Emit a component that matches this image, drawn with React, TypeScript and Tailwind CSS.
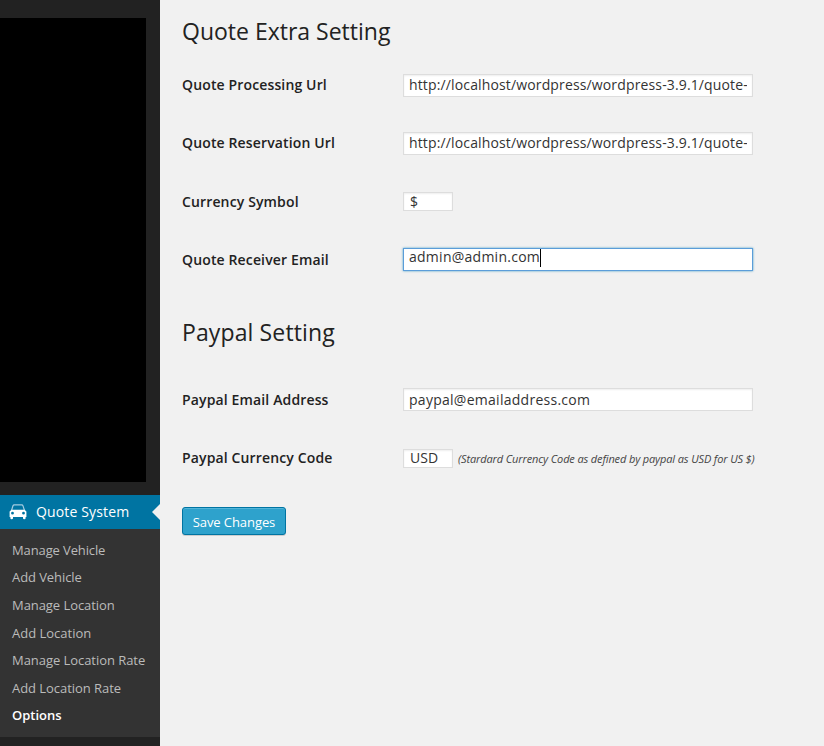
import React from "react";

const links = [
  { label: "Manage Vehicle", height: "h-[27px]", tracking: "tracking-[-0.12px]" },
  { label: "Add Vehicle", height: "h-[28px]", tracking: "tracking-[-0.08px]" },
  { label: "Manage Location", height: "h-[28px]", tracking: "tracking-[-0.06px]" },
  { label: "Add Location", height: "h-[27px]", tracking: "tracking-normal" },
  { label: "Manage Location Rate", height: "h-[28px]", tracking: "tracking-[-0.05px]" },
  { label: "Add Location Rate", height: "h-[27px]", tracking: "tracking-[-0.05px]" },
];

const field =
  "border border-[#ddd] bg-white text-sm text-[#333] shadow-[inset_0_1px_2px_rgba(0,0,0,0.07)] overflow-hidden whitespace-nowrap";

function Row({ label, offset = "pt-[19px]", children }: { label: string; offset?: string; children: React.ReactNode }) {
  return (
    <div className="flex h-[58px] items-start">
      <div className={`w-[221px] shrink-0 text-sm leading-5 font-semibold tracking-[0.14px] text-[#222] ${offset}`}>{label}</div>
      {children}
    </div>
  );
}

function CarIcon() {
  return (
    <svg width="18" height="16" viewBox="0 0 18 16" className="block">
      <path d="M2.5 6.5 L4 1.8 Q4.3 .8 5.4 .8 H12.6 Q13.7 .8 14 1.8 L15.5 6.5" fill="none" stroke="#a4cbe0" strokeWidth="1.2" />
      <path
        fillRule="evenodd"
        fill="#fff"
        d="M2.4 5.7 H15.6 L17.4 7.4 V13 H16.6 V14.3 Q16.6 15.3 15.3 15.3 Q14 15.3 14 14.3 V13 H4 V14.3 Q4 15.3 2.7 15.3 Q1.4 15.3 1.4 14.3 V13 H.6 V7.4 Z M3.5 7.8 A1.4 1.4 0 1 0 3.5 10.6 A1.4 1.4 0 1 0 3.5 7.8 Z M14.5 7.8 A1.4 1.4 0 1 0 14.5 10.6 A1.4 1.4 0 1 0 14.5 7.8 Z"
      />
    </svg>
  );
}

export default function App() {
  return (
    <div className="flex h-[746px] w-[824px] overflow-hidden bg-[#f1f1f1] font-['Open_Sans',sans-serif]">
      <aside className="flex w-40 shrink-0 flex-col bg-[#222]">
        <div className="mt-[18px] h-[464px] w-[146px] bg-black" />
        <div className="mt-[13px] flex h-[34px] items-center justify-between bg-[#0074a2]">
          <div className="flex items-center pl-[9px]">
            <CarIcon />
            <span className="ml-[9px] text-sm leading-5 tracking-[0.14px] text-white">Quote System</span>
          </div>
          <svg width="8" height="16" viewBox="0 0 8 16">
            <path d="M8 0 L0 8 L8 16 Z" fill="#f1f1f1" />
          </svg>
        </div>
        <nav className="h-[208px] bg-[#333] pt-[12px] pl-3 text-[13px] leading-[18px] whitespace-nowrap text-[#bbb]">
          {links.map((l) => (
            <div key={l.label} className={`${l.height} ${l.tracking}`}>{l.label}</div>
          ))}
          <div className="font-semibold text-white">Options</div>
        </nav>
      </aside>

      <main className="flex-1 pl-[22px]">
        <h2 className="h-[56px] pt-[17px] text-[23px] leading-[29px] text-[#222]">Quote Extra Setting</h2>
        <Row label="Quote Processing Url">
          <div className={`${field} mt-[18px] h-[23px] w-[350px] px-[5px] leading-[19px]`}>
            <div className="h-[21px] overflow-hidden tracking-[0.14px]">http://localhost/wordpress/wordpress-3.9.1/quote-</div>
          </div>
        </Row>
        <Row label="Quote Reservation Url">
          <div className={`${field} mt-[18px] h-[23px] w-[350px] px-[5px] leading-[19px]`}>
            <div className="h-[21px] overflow-hidden tracking-[0.14px]">http://localhost/wordpress/wordpress-3.9.1/quote-</div>
          </div>
        </Row>
        <Row label="Currency Symbol" offset="pt-[20px]">
          <div className={`${field} mt-[20px] h-[19px] w-[50px] px-[6px] leading-[17px]`}>$</div>
        </Row>
        <Row label="Quote Receiver Email" offset="pt-[20px]">
          <div className="mt-[18px] flex h-[23px] w-[350px] items-start border border-[#5b9dd9] bg-white pl-[5px] text-sm leading-[15px] tracking-[0.26px] text-[#333] shadow-[0_0_2px_rgba(30,140,190,0.8)]">
            <span>admin@admin.com</span>
            <span className="h-[18px] w-px bg-black" />
          </div>
        </Row>
        <h2 className="h-[82px] pt-[30px] text-[23px] leading-[29px] tracking-[0.12px] text-[#222]">Paypal Setting</h2>
        <Row label="Paypal Email Address" offset="pt-[20px]">
          <div className={`${field} mt-[18px] h-[23px] w-[350px] px-[5px] leading-[21px] tracking-[0.27px]`}>paypal@emailaddress.com</div>
        </Row>
        <Row label="Paypal Currency Code" offset="pt-[20px]">
          <div className={`${field} mt-[21px] h-[19px] w-[50px] px-[6px] leading-[15px]`}>USD</div>
          <em className="mt-[22px] ml-[5px] text-[11px] leading-[18px] tracking-[-0.13px] whitespace-nowrap text-[#444]">
            (Stardard Currency Code as defined by paypal as USD for US $)
          </em>
        </Row>
        <button className="mt-[21px] flex h-[28px] w-[104px] items-center justify-center rounded-[3px] border border-[#0074a2] bg-[#2ea2cc] pt-[2px] text-[13px] leading-[18px] tracking-[-0.08px] whitespace-nowrap text-white shadow-[inset_0_1px_0_rgba(120,200,230,0.5),0_1px_0_rgba(0,0,0,0.15)]">
          Save Changes
        </button>
      </main>
    </div>
  );
}
